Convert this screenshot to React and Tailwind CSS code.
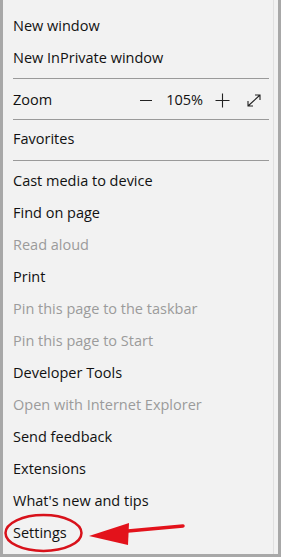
import React from 'react';

const items = [
  { label: 'Cast media to device' },
  { label: 'Find on page' },
  { label: 'Read aloud', disabled: true },
  { label: 'Print' },
  { label: 'Pin this page to the taskbar', disabled: true },
  { label: 'Pin this page to Start', disabled: true },
  { label: 'Developer Tools' },
  { label: 'Open with Internet Explorer', disabled: true },
  { label: 'Send feedback' },
  { label: 'Extensions' },
  { label: "What's new and tips" },
  { label: 'Settings' },
];

const Row = ({ label, disabled, children }) => (
  <div
    className={`h-8 flex items-center pl-[10px] pr-[17px] text-[14.5px] ${
      disabled ? 'text-[#9b9b9b]' : 'text-[#111]'
    }`}
  >
    <span className="flex-1">{label}</span>
    {children}
  </div>
);

const Divider = ({ className }) => (
  <div className={`h-px bg-[#9a9a9a] ml-[10px] mr-[9px] ${className}`} />
);

export default function App() {
  return (
    <div
      className="relative w-[281px] h-[557px] bg-[#f2f2f2] border-l-[3px] border-r-[3px] border-b-[3px] border-[#a8a8a8] overflow-hidden"
      style={{ fontFamily: '"Open Sans", "Noto Sans", sans-serif' }}
    >
      <div className="absolute right-[4px] top-0 bottom-0 w-px bg-[#e0e0e0]" />
      <div className="flex flex-col pt-[10px]">
        <Row label="New window" />
        <Row label="New InPrivate window" />
        <Divider className="mt-[4px] mb-[5px]" />
        <Row label="Zoom">
          <div className="flex items-center text-[#111]">
            <span className="block w-[12px] h-px bg-[#222] mr-[14px]" />
            <span className="mr-[12px]">105%</span>
            <svg width="15" height="15" viewBox="0 0 15 15" className="mr-[17px]">
              <path d="M7.5 0.5v14M0.5 7.5h14" stroke="#222" strokeWidth="1.1" fill="none" />
            </svg>
            <svg width="14" height="13" viewBox="0 0 14 13">
              <path
                d="M1 12L13 1M8 1h5v5M1 7v5h5"
                stroke="#222"
                strokeWidth="1.1"
                fill="none"
              />
            </svg>
          </div>
        </Row>
        <Divider className="mt-[3px] mb-[3px]" />
        <Row label="Favorites" />
        <Divider className="mt-[5px] mb-[4px]" />
        {items.map((it) => (
          <Row key={it.label} {...it} />
        ))}
      </div>
      <svg
        className="absolute left-[-3px] top-0 pointer-events-none"
        width="281"
        height="557"
        viewBox="0 0 281 557"
      >
        <ellipse cx="43.5" cy="533" rx="38" ry="18" fill="none" stroke="#d8121b" strokeWidth="2.5" />
        <path d="M128 531 L183 526" stroke="#e3121b" strokeWidth="3.5" fill="none" strokeLinecap="round" />
        <path d="M89 536 L129 523 L128 545 Z" fill="#e3121b" />
      </svg>
    </div>
  );
}
